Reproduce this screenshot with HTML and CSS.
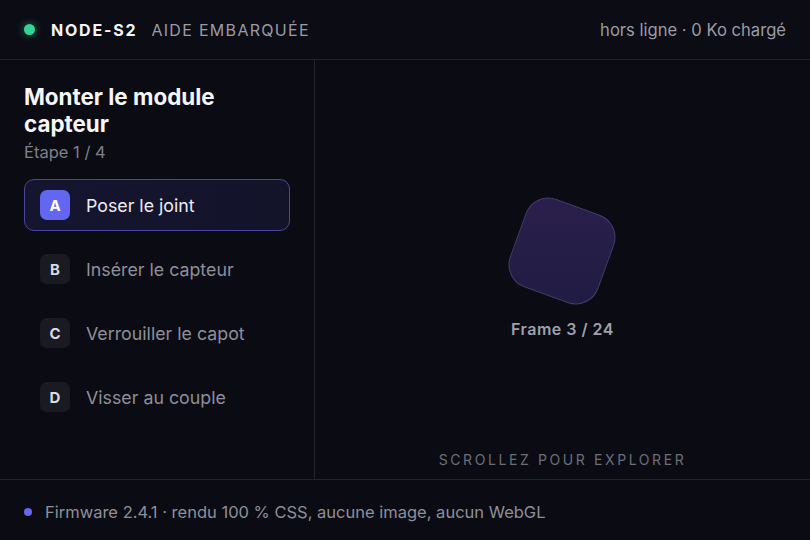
FILE: index.html
```html
<!DOCTYPE html>
<html lang="fr">
<head>
    <meta charset="UTF-8">
    <meta name="viewport" content="width=device-width, initial-scale=1.0">
    <title>NODE-S2 · Aide embarquée</title>
    <link rel="stylesheet" href="styles.css">
</head>
<body>
    <div class="app">
        <header class="topbar">
            <div class="brand">
                <span class="status-dot"></span>
                <span class="brand-name">NODE-S2</span>
                <span class="brand-sub">AIDE EMBARQUÉE</span>
            </div>
            <div class="net-status">hors ligne · 0 Ko chargé</div>
        </header>

        <div class="body">
            <aside class="sidebar">
                <h1>Monter le module capteur</h1>
                <div class="step-count">Étape 1 / 4</div>

                <ul class="steps">
                    <li class="step active">
                        <span class="step-key">A</span>
                        <span class="step-label">Poser le joint</span>
                    </li>
                    <li class="step">
                        <span class="step-key">B</span>
                        <span class="step-label">Insérer le capteur</span>
                    </li>
                    <li class="step">
                        <span class="step-key">C</span>
                        <span class="step-label">Verrouiller le capot</span>
                    </li>
                    <li class="step">
                        <span class="step-key">D</span>
                        <span class="step-label">Visser au couple</span>
                    </li>
                </ul>
            </aside>

            <main class="viewer">
                <div class="stage">
                    <div class="part"></div>
                    <div class="frame-label">Frame 3 / 24</div>
                </div>
                <div class="scroll-hint">SCROLLEZ POUR EXPLORER</div>
            </main>
        </div>

        <footer class="footer">
            <span class="footer-dot"></span>
            Firmware 2.4.1 · rendu 100 % CSS, aucune image, aucun WebGL
        </footer>
    </div>
</body>
</html>
```

FILE: styles.css
```css
* {
    box-sizing: border-box;
}

html, body {
    margin: 0;
    height: 100%;
}

body {
    font-family: Inter, 'Noto Sans', 'Liberation Sans', sans-serif;
    background-color: #0b0b13;
    color: #e8e8ee;
}

.app {
    display: flex;
    flex-direction: column;
    height: 540px;
}

/* 상단 바 */
.topbar {
    height: 60px;
    display: flex;
    align-items: center;
    justify-content: space-between;
    padding: 0 24px;
    border-bottom: 1px solid #22232c;
    background-color: #0b0c14;
}

.brand {
    display: flex;
    align-items: center;
}

.status-dot {
    width: 11px;
    height: 11px;
    border-radius: 50%;
    background-color: #34d399;
    box-shadow: 0 0 8px rgba(52, 211, 153, 0.55);
    margin-right: 16px;
}

.brand-name {
    font-weight: 700;
    font-size: 16px;
    letter-spacing: 1.8px;
    color: #f4f4f7;
    margin-right: 14px;
}

.brand-sub {
    font-size: 16px;
    letter-spacing: 1.3px;
    color: #9a9ba6;
}

.net-status {
    font-size: 16.6px;
    color: #9a9ba6;
}

/* 본문 */
.body {
    flex: 1;
    display: flex;
    min-height: 0;
}

.sidebar {
    width: 315px;
    border-right: 1px solid #22232c;
    padding: 23px 24px 0;
}

.sidebar h1 {
    margin: 0;
    font-size: 22.4px;
    line-height: 27px;
    font-weight: 700;
    color: #f6f6f8;
    width: 240px;
}

.step-count {
    margin-top: 5px;
    font-size: 16.5px;
    color: #7f808b;
}

.steps {
    list-style: none;
    margin: 17px 0 0;
    padding: 0;
    width: 266px;
}

.step {
    display: flex;
    align-items: center;
    height: 52px;
    padding: 0 15px;
    margin-bottom: 12px;
    border: 1px solid transparent;
    border-radius: 10px;
}

.step.active {
    border-color: #4c45a0;
    background: linear-gradient(90deg, #161530 0%, #13132a 100%);
}

.step-key {
    width: 30px;
    height: 30px;
    border-radius: 7px;
    display: flex;
    align-items: center;
    justify-content: center;
    font-size: 15px;
    font-weight: 700;
    color: #d9d9e0;
    background-color: #191a22;
    margin-right: 16px;
}

.step.active .step-key {
    background-color: #6366f1;
    color: #fff;
}

.step-label {
    font-size: 17.8px;
    color: #8e8f9a;
}

.step.active .step-label {
    color: #ececf2;
}

/* 뷰어 */
.viewer {
    flex: 1;
    display: flex;
    flex-direction: column;
    align-items: center;
}

.stage {
    flex: 1;
    display: flex;
    flex-direction: column;
    align-items: center;
    justify-content: center;
    padding-top: 32px;
}

.part {
    width: 94px;
    height: 94px;
    border-radius: 24px;
    transform: rotate(20deg);
    background: linear-gradient(160deg, #2b1f4c 0%, #241e46 60%, #211c42 100%);
    border: 1px solid #433c6e;
    margin: 0 0 21px;
}

.frame-label {
    font-size: 16px;
    font-weight: 600;
    color: #9fa0aa;
    letter-spacing: 0.5px;
}

.scroll-hint {
    font-size: 14px;
    letter-spacing: 2.6px;
    color: #6d6e7a;
    padding-bottom: 11px;
}

/* 하단 */
.footer {
    height: 61px;
    display: flex;
    align-items: center;
    padding: 4px 24px 0;
    border-top: 1px solid #22232c;
    font-size: 16.5px;
    color: #8e8f9a;
}

.footer-dot {
    width: 8px;
    height: 8px;
    border-radius: 50%;
    background-color: #6366f1;
    margin-right: 13px;
}
```
